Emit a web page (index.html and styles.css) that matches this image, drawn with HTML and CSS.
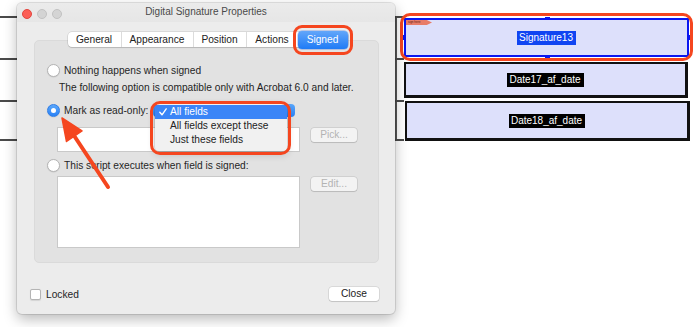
FILE: index.html
```html
<!DOCTYPE html>
<html>
<head>
<meta charset="utf-8">
<link rel="stylesheet" href="styles.css">
</head>
<body>
<div class="doc">
  <div class="row">
    <div class="rule"></div>
    <div class="field field-sig">
      <span class="tag">sign here</span>
      <span class="handle h-top"></span><span class="handle h-bottom"></span>
      <span class="handle h-left"></span><span class="handle h-right"></span>
      <span class="sig-name">Signature13</span>
    </div>
  </div>
  <div class="row">
    <div class="rule"></div>
    <div class="field field-date1"><span class="date-name">Date17_af_date</span></div>
  </div>
  <div class="row row-last">
    <div class="rule"></div>
    <div class="field field-date2"><span class="date-name">Date18_af_date</span></div>
  </div>
</div>

<div class="window">
  <div class="titlebar">
    <div class="lights">
      <span class="light red"></span><span class="light"></span><span class="light"></span>
    </div>
    <div class="title">Digital Signature Properties</div>
  </div>
  <div class="win-body">
    <div class="tabs">
      <div class="seg">
        <span class="tab t-general">General</span>
        <span class="tab t-appearance">Appearance</span>
        <span class="tab t-position">Position</span>
        <span class="tab t-actions">Actions</span>
        <span class="tab t-signed active">Signed</span>
      </div>
    </div>
    <div class="panel">
      <div class="opt">
        <span class="radio"></span><span>Nothing happens when signed</span>
      </div>
      <div class="note">The following option is compatible only with Acrobat 6.0 and later.</div>
      <div class="opt opt-ro">
        <span class="radio on"></span><span class="ro-label">Mark as read-only:</span>
        <div class="popup">
          <div class="menu">
            <div class="item sel"><svg class="check" width="8" height="8" viewBox="0 0 8 8"><path d="M0.8 4.3 L3 6.8 L7.2 0.9" fill="none" stroke="#fff" stroke-width="1.4" stroke-linecap="round" stroke-linejoin="round"/></svg>All fields</div>
            <div class="item">All fields except these</div>
            <div class="item">Just these fields</div>
          </div>
        </div>
      </div>
      <div class="fieldrow">
        <div class="input"></div>
        <span class="btn disabled">Pick...</span>
      </div>
      <div class="opt opt-script">
        <span class="radio"></span><span>This script executes when field is signed:</span>
      </div>
      <div class="fieldrow">
        <div class="input textarea"></div>
        <span class="btn disabled">Edit...</span>
      </div>
    </div>
    <div class="footer">
      <label class="lock"><span class="checkbox"></span><span>Locked</span></label>
      <span class="btn close">Close</span>
    </div>
  </div>
</div>

<svg class="arrow" width="700" height="327" viewBox="0 0 700 327">
  <line x1="108" y1="187" x2="71" y2="131" stroke="#f5461f" stroke-width="4" stroke-linecap="round"/>
  <polygon points="62,118 82,131 66.5,141.5" fill="#f5461f" stroke="#f5461f" stroke-width="1.5" stroke-linejoin="round"/>
</svg>
</body>
</html>
```
FILE: styles.css
```css
* { box-sizing: border-box; }

body {
  margin: 0;
  width: 700px;
  height: 327px;
  overflow: hidden;
  position: relative;
  background: #fff;
  font-family: "Liberation Sans", Arial, sans-serif;
  font-size: 10.2px;
  color: #262626;
}

/* ---------- background document ---------- */
.doc {
  padding-top: 16px;
  display: flex;
  flex-direction: column;
}
.row {
  display: flex;
  height: 42px;
}
.row-last { height: 41px; }
.rule {
  width: 404px;
  flex: none;
  border-top: 2px solid #4a4a4a;
  background: linear-gradient(to right, transparent 395px, #555 395px, #555 397px, transparent 397px);
}
.row-last .rule { border-bottom: 2px solid #4a4a4a; }

.field {
  position: relative;
  width: 285px;
  background: #dde0fb;
  border: 2px solid #111;
  display: flex;
  align-items: center;
  justify-content: center;
  font-family: "Liberation Sans", Arial, sans-serif;
  font-size: 10px;
}
.field-sig {
  margin-top: 2px;
  height: 39px;
  border-color: #0a16f0;
}
.field-sig::after {
  content: "";
  position: absolute;
  top: -7px; bottom: -6px; left: -6px; right: -6px;
  border: 3.5px solid #f5461f;
  border-radius: 10px;
}
.field-date1 {
  margin-top: 4px;
  height: 36px;
  width: 284px;
  border-right-width: 3px;
  border-bottom-width: 3px;
}
.field-date2 {
  margin-top: 1px;
  margin-left: 1px;
  height: 40px;
  border-right-width: 3px;
  border-bottom-width: 3px;
}
.sig-name {
  background: #1045f2;
  color: #fff;
  padding: 1px 3px 1px 2px;
  line-height: 12px;
}
.date-name {
  background: #000;
  color: #fff;
  padding: 1px 3px 1px 2px;
  line-height: 12px;
}
.handle {
  position: absolute;
  background: #0a16f0;
}
.h-top { top: -3px; left: 139px; width: 5px; height: 3px; }
.h-bottom { bottom: -3px; left: 139px; width: 5px; height: 3px; }
.h-left { left: -3px; top: 15px; width: 3px; height: 5px; }
.h-right { right: -3px; top: 15px; width: 3px; height: 5px; }
.tag {
  position: absolute;
  left: 0;
  top: 0;
  width: 26px;
  height: 5px;
  background: #e87c68;
  clip-path: polygon(0 0, 80% 0, 100% 50%, 80% 100%, 0 100%);
  font-size: 3px;
  line-height: 5px;
  color: #5a1a0e;
  padding-left: 2px;
  overflow: hidden;
  white-space: nowrap;
}

/* ---------- dialog window ---------- */
.window {
  position: absolute;
  left: 17px;
  top: 3px;
  width: 378px;
  height: 311px;
  background: #ececec;
  border-radius: 5px;
  box-shadow: 0 0 0 1px rgba(0, 0, 0, 0.1), 0 5px 14px rgba(0, 0, 0, 0.28);
  display: flex;
  flex-direction: column;
}
.titlebar {
  height: 19px;
  display: flex;
  align-items: center;
  position: relative;
  background: linear-gradient(#ebebeb, #e6e6e6);
  border-radius: 5px 5px 0 0;
}
.lights {
  display: flex;
  gap: 5px;
  padding-left: 5px;
  margin-top: 2px;
}
.light {
  width: 10px;
  height: 10px;
  border-radius: 50%;
  background: #d4d4d4;
  border: 0.5px solid #c2c2c2;
}
.light.red {
  background: #fc5f57;
  border-color: #e2463f;
}
.title {
  position: absolute;
  left: 0;
  right: 0;
  top: 3px;
  text-align: center;
  font-size: 10px;
  color: #4a4a4a;
}

.win-body {
  flex: 1;
  display: flex;
  flex-direction: column;
  padding: 10px 16px 0 17px;
}

.tabs {
  display: flex;
  justify-content: center;
  position: relative;
  z-index: 2;
  margin-bottom: -7px;
  padding-left: 2px;
}
.seg {
  display: flex;
  align-items: center;
  height: 15px;
  background: #fff;
  border-radius: 4px;
  box-shadow: 0 0 0 0.5px rgba(0, 0, 0, 0.16), 0 1px 1px rgba(0, 0, 0, 0.12);
}
.tab {
  height: 15px;
  line-height: 15px;
  text-align: center;
  border-left: 1px solid #dcdcdc;
  color: #222;
}
.t-general { width: 53px; border-left: none; }
.t-appearance { width: 72px; }
.t-position { width: 53px; }
.t-actions { width: 52px; }
.t-signed { width: 50px; }
.tab.active {
  position: relative;
  height: 18px;
  line-height: 18px;
  border-left: none;
  border-radius: 4px;
  color: #fff;
  background: linear-gradient(#62a6fa, #1f7bf6);
  box-shadow: 0 0 0 0.5px rgba(0, 60, 200, 0.4);
}
.tab.active::after {
  content: "";
  position: absolute;
  top: -6px; bottom: -6px; left: -5px; right: -5px;
  border: 3.5px solid #f5461f;
  border-radius: 9px;
}

.panel {
  height: 223px;
  background: #e2e2e2;
  border: 1px solid #dadada;
  border-radius: 5px;
  padding: 22px 10px 0 12px;
  display: flex;
  flex-direction: column;
}
.opt {
  display: flex;
  align-items: center;
  gap: 4px;
  height: 14px;
  white-space: nowrap;
}
.radio {
  width: 13px;
  height: 13px;
  border-radius: 50%;
  background: #fff;
  border: 0.5px solid #b4b4b4;
  box-shadow: 0 0.5px 1px rgba(0, 0, 0, 0.12);
  flex: none;
  display: flex;
  align-items: center;
  justify-content: center;
}
.radio.on {
  background: linear-gradient(#5aa7fb, #2a82f6);
  border-color: #2f7de6;
}
.radio.on::after {
  content: "";
  width: 5px;
  height: 5px;
  border-radius: 50%;
  background: #fff;
}
.note {
  margin-top: 4px;
  padding-left: 12px;
  line-height: 14px;
  color: #1f1f1f;
  white-space: nowrap;
}
.opt-ro { margin-top: 8px; }
.ro-label { width: 84px; }
.popup {
  position: relative;
  margin-left: 1px;
  width: 142px;
  height: 13px;
  border-radius: 4px;
  background: linear-gradient(#5aa7fb, #2a82f6);
}
.menu {
  position: absolute;
  left: 2px;
  top: -1px;
  width: 132px;
  height: 48px;
  padding-top: 2px;
  background: #f1f1f1;
  border-radius: 4px;
  box-shadow: 0 0 0 0.5px rgba(0, 0, 0, 0.15), 0 3px 8px rgba(0, 0, 0, 0.2);
  z-index: 3;
}
.menu::after {
  content: "";
  position: absolute;
  top: -2px; bottom: -4px; left: -5px; right: -4px;
  border: 3.5px solid #f5461f;
  border-radius: 10px;
}
.item {
  position: relative;
  height: 14px;
  line-height: 14px;
  padding-left: 15px;
  color: #222;
  white-space: nowrap;
}
.item.sel {
  background: #3a85f7;
  color: #fff;
}
.check {
  position: absolute;
  left: 4px;
  top: 3px;
}

.fieldrow {
  display: flex;
  align-items: flex-start;
  gap: 11px;
  margin-top: 10px;
  padding-left: 10px;
}
.input {
  width: 243px;
  height: 25px;
  background: #fff;
  border: 1px solid #c9c9c9;
}
.textarea {
  height: 72px;
}
.opt-script { margin-top: 7px; }
.opt-script + .fieldrow { margin-top: 4px; }
.fieldrow + .opt-script { margin-top: 6px; }

.btn {
  width: 46px;
  height: 14px;
  line-height: 14px;
  text-align: center;
  border-radius: 3px;
  background: #fff;
  box-shadow: 0 0 0 0.5px rgba(0, 0, 0, 0.16), 0 1px 1px rgba(0, 0, 0, 0.1);
  color: #222;
  flex: none;
  margin-top: 1px;
}
.btn.disabled {
  background: #f3f3f3;
  color: #b3b3b3;
}

.footer {
  display: flex;
  align-items: center;
  justify-content: space-between;
  margin-top: 24px;
  padding-left: 0;
}
.lock {
  display: flex;
  align-items: center;
  gap: 5px;
  margin-left: -4px;
  color: #262626;
}
.checkbox {
  width: 11px;
  height: 11px;
  background: #fff;
  border-radius: 2px;
  border: 0.5px solid #b4b4b4;
  box-shadow: 0 0.5px 1px rgba(0, 0, 0, 0.1);
}
.close {
  width: 50px;
  margin-top: 0;
}

.arrow {
  position: absolute;
  left: 0;
  top: 0;
  pointer-events: none;
}
```
